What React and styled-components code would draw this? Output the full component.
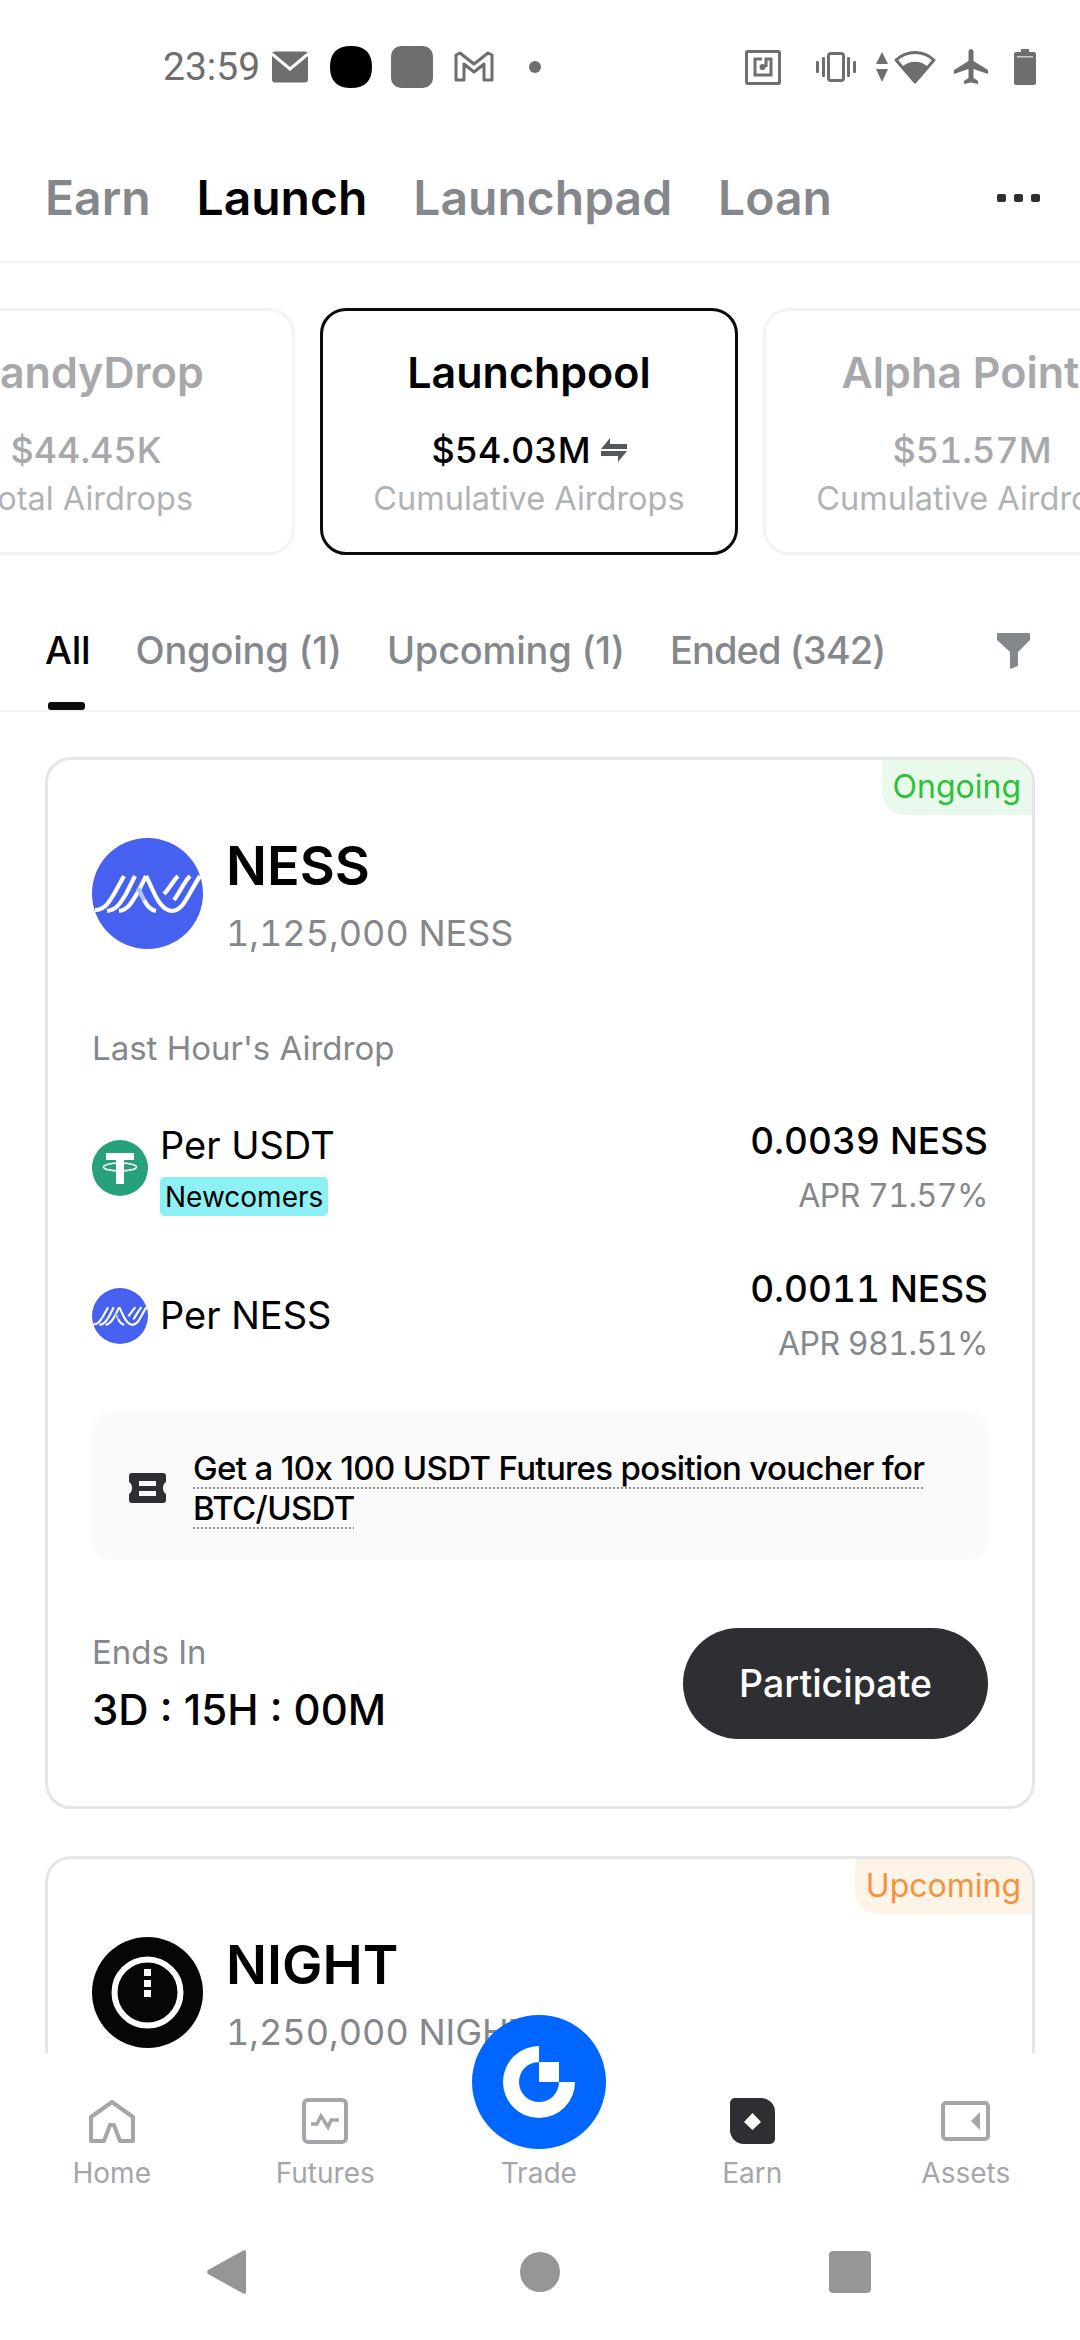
import React from 'react';
import styled, { createGlobalStyle } from 'styled-components';

const GlobalStyle = createGlobalStyle`
  html, body {
    margin: 0;
    padding: 0;
    background: #fff;
  }
  * {
    box-sizing: border-box;
  }
`;

const Page = styled.div`
  width: 1080px;
  height: 2340px;
  display: flex;
  flex-direction: column;
  overflow: hidden;
  background: #fff;
  font-family: Inter, 'Liberation Sans', sans-serif;
  color: #000;
`;

const StatusBar = styled.div`
  height: 134px;
  flex-shrink: 0;
  display: flex;
  align-items: center;
  justify-content: space-between;
  padding: 0 44px 0 163px;
`;

const StatusGroup = styled.div`
  display: flex;
  align-items: center;
`;

const Clock = styled.span`
  font-family: Roboto, sans-serif;
  font-size: 39px;
  line-height: 44px;
  color: #6e6e6e;
`;

const Slot = styled.span`
  display: flex;
  margin-left: ${(p) => p.$left}px;
`;

const TopTabs = styled.div`
  height: 129px;
  flex-shrink: 0;
  display: flex;
  align-items: center;
  gap: 46px;
  padding: 0 40px 0 45px;
  border-bottom: 2px solid #f2f2f2;
`;

const TopTab = styled.span`
  font-size: 48px;
  line-height: 60px;
  font-weight: 600;
  color: ${(p) => (p.$active ? '#000' : '#84888c')};
`;

const More = styled.div`
  margin-left: auto;
  display: flex;
  gap: 8px;
  span {
    width: 9px;
    height: 8px;
    border-radius: 2px;
    background: #2e2f33;
  }
`;

const Programs = styled.div`
  flex-shrink: 0;
  display: flex;
  gap: 25px;
  margin: 45px 0 0 -123px;
`;

const Program = styled.div`
  width: 418px;
  height: 247px;
  flex-shrink: 0;
  display: flex;
  flex-direction: column;
  align-items: center;
  padding-top: 35px;
  border-radius: 26px;
  border: 3px solid ${(p) => (p.$active ? '#0b0b0b' : '#f3f3f3')};
  white-space: nowrap;
  overflow: hidden;
`;

const ProgramName = styled.div`
  font-size: 43px;
  line-height: 52px;
  font-weight: 600;
  color: ${(p) => (p.$active ? '#000' : '#a6a8ab')};
`;

const ProgramValue = styled.div`
  display: flex;
  align-items: center;
  gap: 10px;
  margin-top: 30px;
  font-size: 36px;
  line-height: 44px;
  font-weight: 500;
  font-feature-settings: 'tnum';
  color: ${(p) => (p.$active ? '#000' : '#a6a8ab')};
`;

const ProgramLabel = styled.div`
  margin-top: 6px;
  font-size: 32.5px;
  line-height: 42px;
  color: #b0b3b6;
`;

const FilterBar = styled.div`
  height: 112px;
  flex-shrink: 0;
  margin-top: 45px;
  display: flex;
  gap: 45px;
  padding: 0 50px 0 45px;
  border-bottom: 2px solid #f4f4f4;
`;

const FilterTab = styled.div`
  position: relative;
  padding-top: 27px;
  font-size: 38px;
  line-height: 46px;
  font-weight: 500;
  letter-spacing: ${(p) => (p.$tight ? '-0.9px' : '-0.2px')};
  color: ${(p) => (p.$active ? '#000' : '#84888c')};
  ${(p) =>
    p.$active &&
    `&::after {
      content: '';
      position: absolute;
      left: 3px;
      bottom: 0;
      width: 37px;
      height: 8px;
      border-radius: 3px;
      background: #0b0b0b;
    }`}
`;

const FilterIcon = styled.div`
  margin-left: auto;
  padding-top: 33px;
`;

const List = styled.div`
  flex: 1;
  min-height: 0;
  overflow: hidden;
  display: flex;
  flex-direction: column;
  gap: 47px;
  padding: 45px 45px 0;
`;

const Card = styled.div`
  position: relative;
  flex-shrink: 0;
  border: 3px solid #e6e6e6;
  border-radius: 26px;
  padding: 78px 44px 67px;
`;

const StateBadge = styled.div`
  position: absolute;
  top: 0;
  right: 0;
  height: 55px;
  padding: 0 11px 2px 11px;
  display: flex;
  align-items: center;
  font-size: 32px;
  color: ${(p) => p.$color};
  background: ${(p) => p.$bg};
  border-radius: 0 22px 0 22px;
`;

const Head = styled.div`
  display: flex;
  gap: 23px;
  height: 110px;
`;

const Coin = styled.div`
  display: flex;
  flex-shrink: 0;
`;

const Name = styled.div`
  font-size: 54px;
  line-height: 56px;
  font-weight: 600;
`;

const Total = styled.div`
  margin-top: 17px;
  font-size: 36px;
  line-height: 44px;
  font-feature-settings: 'tnum';
  color: #84888c;
  white-space: nowrap;
`;

const Caption = styled.div`
  font-size: 33px;
  line-height: 40px;
  color: #84888c;
  margin-top: ${(p) => p.$top || 0}px;
`;

const Rows = styled.div`
  display: flex;
  flex-direction: column;
  gap: 52px;
  margin-top: 52px;
`;

const Row = styled.div`
  display: flex;
  align-items: center;
  justify-content: space-between;
`;

const RowLeft = styled.div`
  display: flex;
  align-items: center;
  gap: 12px;
`;

const RowText = styled.div`
  display: flex;
  flex-direction: column;
  align-items: flex-start;
  gap: ${(p) => (p.$tagged ? 10 : 0)}px;
  padding-top: ${(p) => (p.$tagged ? 3 : 0)}px;
  margin-top: ${(p) => (p.$tagged ? 0 : -2)}px;
`;

const Per = styled.div`
  font-size: 38px;
  line-height: 44px;
`;

const Tag = styled.div`
  height: 39px;
  padding: 0 5px;
  display: flex;
  align-items: center;
  border-radius: 5px;
  background: #8cf0f4;
  font-size: 28px;
`;

const RowRight = styled.div`
  display: flex;
  flex-direction: column;
  align-items: flex-end;
  gap: 14px;
`;

const Rate = styled.div`
  font-size: 37px;
  line-height: 42px;
  font-weight: 500;
  font-feature-settings: 'tnum';
`;

const Apr = styled.div`
  font-size: 32px;
  line-height: 40px;
  letter-spacing: -0.5px;
  font-feature-settings: 'tnum';
  color: #84888c;
`;

const Voucher = styled.div`
  height: 148px;
  margin-top: 48px;
  display: flex;
  align-items: center;
  gap: 27px;
  padding: 3px 40px 0 37px;
  border-radius: 20px;
  background: #fafafa;
`;

const VoucherText = styled.div`
  font-size: 33px;
  line-height: 40px;
  font-weight: 500;
  letter-spacing: -0.65px;
  text-decoration: underline dotted #8a8a8a 2px;
  text-underline-offset: 8px;
`;

const Footer = styled.div`
  margin-top: 68px;
  display: flex;
  align-items: center;
  justify-content: space-between;
`;

const Countdown = styled.div`
  margin-top: 12px;
  font-size: 42px;
  line-height: 52px;
  font-weight: 500;
`;

const Participate = styled.button`
  width: 305px;
  height: 111px;
  border: 0;
  border-radius: 56px;
  background: #2e2f33;
  color: #fff;
  font-family: inherit;
  font-size: 37.5px;
  font-weight: 500;
`;

const Bottom = styled.div`
  position: relative;
  height: 287px;
  flex-shrink: 0;
  background: #fff;
`;

const Nav = styled.div`
  display: grid;
  grid-template-columns: repeat(5, 213.5px);
  padding: 45px 5px 0;
`;

const NavItem = styled.div`
  display: flex;
  flex-direction: column;
  align-items: center;
`;

const NavIcon = styled.div`
  height: 46px;
  display: flex;
  align-items: center;
`;

const NavLabel = styled.div`
  margin-top: 11px;
  font-size: 28px;
  line-height: 36px;
  color: #a4a6a9;
`;

const TradeButton = styled.div`
  position: absolute;
  top: -38px;
  left: 472px;
  width: 134px;
  height: 134px;
  display: flex;
  align-items: center;
  justify-content: center;
  border-radius: 50%;
  background: #0066ff;
`;

const SoftKeys = styled.div`
  display: flex;
  align-items: center;
  justify-content: space-between;
  margin-top: 59px;
  padding: 0 209px 0 207px;
  svg:nth-child(2) {
    margin-left: 5px;
  }
`;

const ArrowIcon = () => (
  <svg width="36" height="32" viewBox="0 0 36 32">
    <rect width="36" height="31" y="0.5" rx="3" fill="#6e6e6e" />
    <path d="M0 3 L18 18 L36 3" fill="none" stroke="#fff" strokeWidth="3" />
  </svg>
);

const Blob = ({ color }) => (
  <svg width="42" height="42" viewBox="0 0 42 42">
    <path
      d={
        color === '#000'
          ? 'M21 0C35 0 42 7 42 21S35 42 21 42 0 35 0 21 7 0 21 0Z'
          : 'M10 0H32A10 10 0 0 1 42 10V32A10 10 0 0 1 32 42H10A10 10 0 0 1 0 32V10A10 10 0 0 1 10 0Z'
      }
      fill={color}
    />
  </svg>
);

const MailM = () => (
  <svg width="40" height="32" viewBox="0 0 40 32" fill="none">
    <path
      d="M2 29V4L6 2 20 13 34 2 38 4V29H30V13L20 21 10 13V29Z"
      stroke="#6e6e6e"
      strokeWidth="3"
      strokeLinejoin="round"
    />
  </svg>
);

const Dot = () => (
  <svg width="12" height="12" viewBox="0 0 12 12">
    <circle cx="6" cy="6" r="6" fill="#6e6e6e" />
  </svg>
);

const NfcIcon = () => (
  <svg width="36" height="35" viewBox="0 0 36 35" fill="none" stroke="#6e6e6e" strokeWidth="3">
    <rect x="1.5" y="1.5" width="33" height="32" rx="1.5" />
    <path d="M17 9H10V25H26V9H21V17" />
    <circle cx="17.5" cy="17" r="3" fill="#6e6e6e" stroke="none" />
  </svg>
);

const VibrateIcon = () => (
  <svg width="40" height="30" viewBox="0 0 40 30" fill="#6e6e6e">
    <rect x="12.5" y="1.5" width="15" height="27" rx="2.5" fill="none" stroke="#6e6e6e" strokeWidth="3" />
    <rect x="6" y="5" width="3" height="20" rx="1" />
    <rect x="31" y="5" width="3" height="20" rx="1" />
    <rect x="0" y="9" width="3" height="12" rx="1" />
    <rect x="37" y="9" width="3" height="12" rx="1" />
  </svg>
);

const UpDownIcon = () => (
  <svg width="12" height="30" viewBox="0 0 12 30" fill="#6e6e6e">
    <path d="M6 0L12 12H0Z" />
    <path d="M0 17H12L6 30Z" />
  </svg>
);

const WifiIcon = () => (
  <svg width="42" height="36" viewBox="0 0 42 36">
    <path d="M21 33L2 11C13 1 29 1 40 11Z" fill="none" stroke="#6e6e6e" strokeWidth="3" strokeLinejoin="round" />
    <path d="M21 34L8 18C15 11 27 11 34 18Z" fill="#6e6e6e" />
  </svg>
);

const PlaneIcon = () => (
  <svg width="34" height="36" viewBox="0 0 34 36" fill="#6e6e6e">
    <path d="M14.5 3C14.5 -1 19.5 -1 19.5 3V12L34 21V25L19.5 20V29L24 32V35L17 33.5 10 35V32L14.5 29V20L0 25V21L14.5 12Z" />
  </svg>
);

const BatteryIcon = () => (
  <svg width="22" height="36" viewBox="0 0 22 36">
    <path d="M7 0H15V3H20A2 2 0 0 1 22 5V34A2 2 0 0 1 20 36H2A2 2 0 0 1 0 34V5A2 2 0 0 1 2 3H7Z" fill="#6e6e6e" />
    <rect x="3" y="7" width="16" height="1.5" fill="#ccc" />
  </svg>
);

const SwapIcon = () => (
  <svg width="26" height="24" viewBox="0 0 26 24" fill="#55585c">
    <path d="M9 0V6H26V11H0Z" />
    <path d="M0 13H26L17 24V18H0Z" />
  </svg>
);

const FunnelIcon = () => (
  <svg width="33" height="36" viewBox="0 0 33 36" fill="#84888c">
    <path d="M1 0H32A1 1 0 0 1 33 1V7L21 19V33L13 36V19L0 7V1A1 1 0 0 1 1 0Z" />
  </svg>
);

const NessCoin = ({ size }) => (
  <svg width={size} height={size} viewBox="0 0 111 111">
    <circle cx="55.5" cy="55.5" r="55.5" fill="#4660ef" />
    <g fill="none" stroke="#fff" strokeWidth="4.2">
      <path d="M3 72C12 72 16 66 22 56L32 38" />
      <path d="M15 73C24 72 28 66 34 56L43 38" />
      <path d="M27 73C36 72 40 64 46 54L54 38" />
      <path d="M46 50L52 62" stroke="#b4bff7" />
      <path d="M52 62C55 68 58 72 64 73" />
      <path d="M54 38C60 48 66 72 80 73C92 72 95 58 108 38" />
      <path d="M72 56C78 50 80 44 86 38" />
      <path d="M82 62C88 54 92 44 98 38" />
    </g>
  </svg>
);

const TetherCoin = () => (
  <svg width="56" height="56" viewBox="0 0 56 56">
    <circle cx="28" cy="28" r="28" fill="#26a17b" />
    <path d="M14 13H42V20H32V44H24V20H14Z" fill="#fff" />
    <ellipse cx="28" cy="27" rx="16.5" ry="4" fill="none" stroke="#fff" strokeWidth="1.6" />
  </svg>
);

const NightCoin = () => (
  <svg width="111" height="111" viewBox="0 0 111 111">
    <circle cx="55.5" cy="55.5" r="55.5" fill="#060606" />
    <circle cx="55.5" cy="55.5" r="33" fill="none" stroke="#fff" strokeWidth="6" />
    <rect x="52" y="32" width="7" height="7" fill="#fff" />
    <rect x="52" y="43" width="7" height="7" fill="#fff" />
    <rect x="52" y="53" width="7" height="7" fill="#fff" />
  </svg>
);

const TicketIcon = () => (
  <svg width="37" height="30" viewBox="0 0 37 30" fill="#2e2f33">
    <path
      fillRule="evenodd"
      d="M3 0H34A3 3 0 0 1 37 3V9C33 11 33 19 37 21V27A3 3 0 0 1 34 30H3A3 3 0 0 1 0 27V21C4 19 4 11 0 9V3A3 3 0 0 1 3 0ZM10 8V13H27V8ZM10 18V23H27V18Z"
    />
  </svg>
);

const HomeIcon = () => (
  <svg width="46" height="43" viewBox="0 0 46 43" fill="none" stroke="#a4a6a9" strokeWidth="4" strokeLinejoin="round">
    <path d="M23 2L44 17V41H31L25 25H21L15 41H2V17Z" />
  </svg>
);

const FuturesIcon = () => (
  <svg width="46" height="46" viewBox="0 0 46 46" fill="none" stroke="#a4a6a9">
    <rect x="2" y="2" width="42" height="42" rx="4" strokeWidth="4" />
    <path d="M9 26H15L19 18 26 29 29 22H37" strokeWidth="3.4" />
  </svg>
);

const EarnIcon = () => (
  <svg width="45" height="46" viewBox="0 0 45 46">
    <path d="M5 0H31A14 14 0 0 1 45 14V41A5 5 0 0 1 40 46H14A14 14 0 0 1 0 32V5A5 5 0 0 1 5 0Z" fill="#2e2f33" />
    <path d="M22.5 15L31 24 22.5 32 14 24Z" fill="#fff" />
  </svg>
);

const AssetsIcon = () => (
  <svg width="49" height="40" viewBox="0 0 49 40">
    <rect x="2" y="2" width="45" height="36" rx="3" fill="none" stroke="#a4a6a9" strokeWidth="4" />
    <path d="M39 11V29L30 20Z" fill="#a4a6a9" />
  </svg>
);

const BrandMark = () => (
  <svg width="72" height="72" viewBox="-36 -36 72 72" fill="#fff">
    <path d="M0 -36A36 36 0 1 0 36 0H20A20 20 0 1 1 0 -20Z" />
    <rect x="0" y="-20" width="20" height="20" />
  </svg>
);

const BackKey = () => (
  <svg width="39" height="44" viewBox="0 0 39 44">
    <path d="M37 0A2 2 0 0 1 39 2V42A2 2 0 0 1 37 44L1 24A3 3 0 0 1 1 20Z" fill="#969696" />
  </svg>
);

const HomeKey = () => (
  <svg width="40" height="40" viewBox="0 0 40 40">
    <circle cx="20" cy="20" r="20" fill="#969696" />
  </svg>
);

const RecentKey = () => (
  <svg width="42" height="42" viewBox="0 0 42 42">
    <rect width="42" height="42" rx="4" fill="#969696" />
  </svg>
);

const programs = [
  { name: 'CandyDrop', value: '$44.45K', label: 'Total Airdrops' },
  { name: 'Launchpool', value: '$54.03M', label: 'Cumulative Airdrops', active: true },
  { name: 'Alpha Points', value: '$51.57M', label: 'Cumulative Airdrops' },
];

const navItems = [
  { label: 'Home', icon: <HomeIcon /> },
  { label: 'Futures', icon: <FuturesIcon /> },
  { label: 'Trade', icon: null },
  { label: 'Earn', icon: <EarnIcon /> },
  { label: 'Assets', icon: <AssetsIcon /> },
];

const App = () => {
  return (
    <Page>
      <GlobalStyle />
      <StatusBar>
        <StatusGroup>
          <Clock>23:59</Clock>
          <Slot $left={12}><ArrowIcon /></Slot>
          <Slot $left={22}><Blob color="#000" /></Slot>
          <Slot $left={19}><Blob color="#6e6e6e" /></Slot>
          <Slot $left={21}><MailM /></Slot>
          <Slot $left={35}><Dot /></Slot>
        </StatusGroup>
        <StatusGroup>
          <NfcIcon />
          <Slot $left={35}><VibrateIcon /></Slot>
          <Slot $left={20}><UpDownIcon /></Slot>
          <Slot $left={6}><WifiIcon /></Slot>
          <Slot $left={18}><PlaneIcon /></Slot>
          <Slot $left={26}><BatteryIcon /></Slot>
        </StatusGroup>
      </StatusBar>

      <TopTabs>
        <TopTab>Earn</TopTab>
        <TopTab $active>Launch</TopTab>
        <TopTab>Launchpad</TopTab>
        <TopTab>Loan</TopTab>
        <More><span /><span /><span /></More>
      </TopTabs>

      <Programs>
        {programs.map((p) => (
          <Program key={p.name} $active={p.active}>
            <ProgramName $active={p.active}>{p.name}</ProgramName>
            <ProgramValue $active={p.active}>
              {p.value}
              {p.active ? <SwapIcon /> : null}
            </ProgramValue>
            <ProgramLabel>{p.label}</ProgramLabel>
          </Program>
        ))}
      </Programs>

      <FilterBar>
        <FilterTab $active>All</FilterTab>
        <FilterTab>Ongoing (1)</FilterTab>
        <FilterTab>Upcoming (1)</FilterTab>
        <FilterTab $tight>Ended (342)</FilterTab>
        <FilterIcon><FunnelIcon /></FilterIcon>
      </FilterBar>

      <List>
        <Card>
          <StateBadge $color="#2cc13a" $bg="#e9f9eb">Ongoing</StateBadge>
          <Head>
            <Coin><NessCoin size={111} /></Coin>
            <div>
              <Name>NESS</Name>
              <Total>1,125,000 NESS</Total>
            </div>
          </Head>
          <Caption $top={80}>Last Hour's Airdrop</Caption>
          <Rows>
            <Row>
              <RowLeft>
                <Coin><TetherCoin /></Coin>
                <RowText $tagged>
                  <Per>Per USDT</Per>
                  <Tag>Newcomers</Tag>
                </RowText>
              </RowLeft>
              <RowRight>
                <Rate>0.0039 NESS</Rate>
                <Apr>APR 71.57%</Apr>
              </RowRight>
            </Row>
            <Row>
              <RowLeft>
                <Coin><NessCoin size={56} /></Coin>
                <RowText>
                  <Per>Per NESS</Per>
                </RowText>
              </RowLeft>
              <RowRight>
                <Rate>0.0011 NESS</Rate>
                <Apr>APR 981.51%</Apr>
              </RowRight>
            </Row>
          </Rows>
          <Voucher>
            <Coin><TicketIcon /></Coin>
            <VoucherText>Get a 10x 100 USDT Futures position voucher for BTC/USDT</VoucherText>
          </Voucher>
          <Footer>
            <div>
              <Caption>Ends In</Caption>
              <Countdown>3D : 15H : 00M</Countdown>
            </div>
            <Participate>Participate</Participate>
          </Footer>
        </Card>

        <Card>
          <StateBadge $color="#f5923d" $bg="#fdf3e6">Upcoming</StateBadge>
          <Head>
            <Coin><NightCoin /></Coin>
            <div>
              <Name>NIGHT</Name>
              <Total>1,250,000 NIGHT</Total>
            </div>
          </Head>
        </Card>
      </List>

      <Bottom>
        <TradeButton><BrandMark /></TradeButton>
        <Nav>
          {navItems.map((item) => (
            <NavItem key={item.label}>
              <NavIcon>{item.icon}</NavIcon>
              <NavLabel>{item.label}</NavLabel>
            </NavItem>
          ))}
        </Nav>
        <SoftKeys>
          <BackKey />
          <HomeKey />
          <RecentKey />
        </SoftKeys>
      </Bottom>
    </Page>
  );
};

export default App;
